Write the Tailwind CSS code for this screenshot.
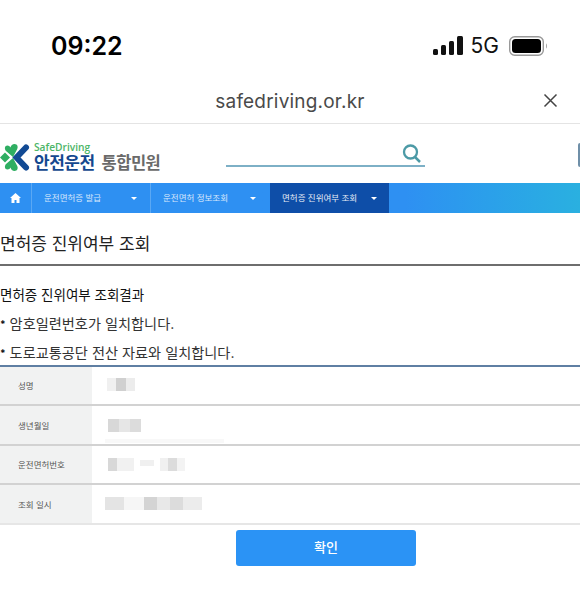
<!doctype html>
<html><head><meta charset="utf-8"><script src="https://cdn.jsdelivr.net/npm/@tailwindcss/browser@4"></script></head>
<body class="m-0 bg-white overflow-hidden font-['Inter','Noto_Sans_CJK_KR',sans-serif]">
<div class="w-[580px] h-[603px] overflow-hidden flex flex-col bg-white relative">
  <!-- status bar -->
  <div class="h-[74px] shrink-0 flex items-start justify-between pl-[51px] pr-[30px] pt-[28px]">
    <span class="text-[25px] leading-[36px] font-semibold text-black">09:22</span>
    <div class="flex items-center gap-[8px] h-[36px]">
      <svg width="30" height="20" viewBox="0 0 30 20" class="fill-[#111]"><rect x="0" y="13" width="5" height="6" rx="1.5"/><rect x="8" y="9" width="5" height="10" rx="1.5"/><rect x="16" y="5" width="5" height="14" rx="1.5"/><rect x="24" y="0" width="6" height="19" rx="1.5"/></svg>
      <span class="text-[21px] leading-[36px] font-normal text-[#111]">5G</span>
      <svg width="41" height="20" viewBox="0 0 41 20" class="ml-[2px]"><rect x="0.7" y="0.7" width="33.6" height="18.6" rx="5" fill="none" stroke="#999" stroke-width="1.4"/><rect x="3" y="3" width="29" height="14" rx="3.5" fill="#000"/><path d="M37 7.5c1.2.4 1.2 4.600 0 5z" fill="#999"/></svg>
    </div>
  </div>
  <!-- url bar -->
  <div class="h-[50px] shrink-0 border-b border-[#e4e4e4] flex items-center relative justify-center pt-[7px]">
    <span class="text-[19px] text-[#4a4a4a] tracking-[0.2px]">safedriving.or.kr</span>
    <svg class="absolute left-[543px] top-[19px]" width="15" height="15" viewBox="0 0 15 15"><path d="M1.5 1.500l12 12M13.500 1.500l-12 12" stroke="#444" stroke-width="1.500" fill="none"/></svg>
  </div>
  <!-- header -->
  <div class="h-[59px] shrink-0 relative">
    <div class="absolute left-0 top-[17px] flex items-start">
      <svg width="31" height="30" viewBox="0 0 31 30" class="mt-[2px]">
        <g fill="#2fae62"><path d="M13 14L6 8C4.300 6 4.500 2.500 7.500 2.500c1.500 0 2.500 1 3 2 .5-2 2-3.500 4-3.500 3 0 4 3 2.500 5.500z"/><path d="M13 15l-7 6c-1.700 2-1.500 5.500 1.500 5.500 1.500 0 2.500-1 3-2 .5 2 2 3.500 4 3.500 3 0 4-3 2.500-5.500z"/><path d="M0 14.500L5 9.500l5 5-5 5z"/></g>
        <path d="M26 4.500L16.500 14.500 26 24.500" fill="none" stroke="#124a94" stroke-width="6" stroke-linejoin="miter" stroke-linecap="round"/>
      </svg>
      <div class="ml-[3px] flex flex-col">
        <span class="text-[10.2px] leading-[10px] mt-[1px] font-semibold text-[#4cb567] font-['Open_Sans',sans-serif]">SafeDriving</span>
        <div class="flex items-baseline mt-[2px]">
          <span class="text-[17px] leading-[18px] font-bold text-[#14488f] tracking-[-0.5px]">안전운전</span>
          <span class="text-[16.500px] leading-[18px] font-semibold text-[#6a6a6a] ml-[7px] tracking-[-0.5px]">통합민원</span>
        </div>
      </div>
    </div>
    <div class="absolute left-[226px] top-[20px] w-[199px] h-[23px] border-b-2 border-[#7db0c6]">
      <svg class="absolute right-[3px] top-[0px]" width="20" height="20" viewBox="0 0 20 20"><circle cx="8.500" cy="8" r="6.500" fill="none" stroke="#4c9aa6" stroke-width="2.300"/><path d="M13 13l5 5" stroke="#4c9aa6" stroke-width="2.500"/></svg>
    </div>
    <div class="absolute left-[578px] top-[19px] w-[4px] h-[24px] rounded-[2px] bg-[#6f8fa8]"></div>
  </div>
  <!-- nav -->
  <div class="h-[30px] shrink-0 flex items-stretch bg-linear-to-r from-[#2e90f2] from-70% to-[#2ab0e0] text-white">
    <div class="w-[32px] flex items-center justify-center border-r border-[#5aa8f4]">
      <svg width="11" height="10" viewBox="0 0 11 10" fill="#fff"><path d="M5.500 0L0 5h1.500v5h3V7h2v3h3V5H11z"/></svg>
    </div>
    <div class="w-[119px] flex items-center justify-between pl-[12px] pr-[13px] border-r border-[#5aa8f4]">
      <span class="text-[8.500px] opacity-80">운전면허증 발급</span>
      <span class="w-0 h-0 border-x-[3.500px] border-x-transparent border-t-[3.500px] border-t-white"></span>
    </div>
    <div class="w-[119px] flex items-center justify-between pl-[12px] pr-[14px]">
      <span class="text-[8.500px] opacity-80">운전면허 정보조회</span>
      <span class="w-0 h-0 border-x-[3.500px] border-x-transparent border-t-[3.500px] border-t-white"></span>
    </div>
    <div class="w-[119px] bg-[#0e4ea8] flex items-center justify-between pl-[12px] pr-[12px]">
      <span class="text-[8.500px] opacity-90">면허증 진위여부 조회</span>
      <span class="w-0 h-0 border-x-[3.500px] border-x-transparent border-t-[3.500px] border-t-white"></span>
    </div>
  </div>
  <!-- title -->
  <div class="h-[53px] shrink-0 border-b-2 border-[#6e6e6e] flex items-center pt-[13px]">
    <span class="text-[17px] text-[#222]">면허증 진위여부 조회</span>
  </div>
  <div class="pt-[19px] flex flex-col">
    <p class="text-[13.500px] leading-[20px] text-[#111]">면허증 진위여부 조회결과</p>
    <p class="text-[14.200px] leading-[20px] mt-[9px] text-[#333]"><span class="text-[10px] font-bold text-[#111] align-top">*</span> 암호일련번호가 일치합니다.</p>
    <p class="text-[14.200px] leading-[20px] mt-[9px] text-[#333]"><span class="text-[10px] font-bold text-[#111] align-top">*</span> 도로교통공단 전산 자료와 일치합니다.</p>
  </div>
  <!-- table -->
  <div class="mt-[2px] border-t-2 border-[#5f7fa3] flex flex-col">
    <div class="h-[39px] flex border-b-2 border-[#d2d2d2]">
      <div class="w-[92px] bg-[#f1f2f2] flex items-center pl-[18px] pt-[2px] text-[8.500px] text-[#555]">성명</div>
      <div class="flex-1 flex items-center pl-[15px]"><div class="flex h-[13px] mb-[2px] w-[28px]"><i class="flex-1 bg-[#f0f0f0]"></i><i class="flex-1 bg-[#d0d0d0]"></i><i class="flex-1 bg-[#ececec]"></i></div></div>
    </div>
    <div class="h-[40px] flex border-b-2 border-[#d2d2d2] relative">
      <div class="w-[92px] bg-[#f1f2f2] flex items-center pl-[18px] pt-[2px] text-[8.500px] text-[#555]">생년월일</div>
      <div class="flex-1 flex items-center pl-[16px]"><div class="flex h-[13px] mt-[1px] w-[33px]"><i class="flex-1 bg-[#d8d8d8]"></i><i class="flex-1 bg-[#e6e6e6]"></i><i class="flex-1 bg-[#dcdcdc]"></i></div></div>
      <div class="absolute left-[105px] bottom-[1px] w-[119px] h-[4px] bg-[#f8f8f8]"></div>
    </div>
    <div class="h-[39px] flex border-b-2 border-[#d2d2d2]">
      <div class="w-[92px] bg-[#f1f2f2] flex items-center pl-[18px] pt-[2px] text-[8.500px] text-[#555]">운전면허번호</div>
      <div class="flex-1 flex items-center pl-[16px] gap-[6px]"><div class="flex h-[13px] w-[26px]"><i class="flex-1 bg-[#d8d8d8]"></i><i class="flex-[2] bg-[#f1f1f1]"></i></div><div class="h-[6px] w-[14px] mb-[4px] bg-[#f0f0f0]"></div><div class="flex h-[13px] w-[25px]"><i class="flex-1 bg-[#f0f0f0]"></i><i class="flex-1 bg-[#dcdcdc]"></i><i class="flex-1 bg-[#f3f3f3]"></i></div></div>
    </div>
    <div class="h-[40px] flex border-b-2 border-[#e6e6e6]">
      <div class="w-[92px] bg-[#f1f2f2] flex items-center pl-[18px] pt-[2px] text-[8.500px] text-[#555]">조회 일시</div>
      <div class="flex-1 flex items-center pl-[13px]"><div class="flex h-[13px] w-[97px] mb-[2px]"><i class="flex-[3] bg-[#e4e4e4]"></i><i class="flex-[3] bg-[#f6f6f6]"></i><i class="flex-[2] bg-[#d4d4d4]"></i><i class="flex-[2] bg-[#e8e8e8]"></i><i class="flex-[2] bg-[#dcdcdc]"></i><i class="flex-[3] bg-[#ececec]"></i></div></div>
    </div>
  </div>
  <div class="pl-[236px] mt-[5px]">
    <button class="w-[180px] h-[36px] rounded-[3px] bg-[#2b93f5] text-white text-[13px] font-medium">확인</button>
  </div>
</div>
</body></html>
